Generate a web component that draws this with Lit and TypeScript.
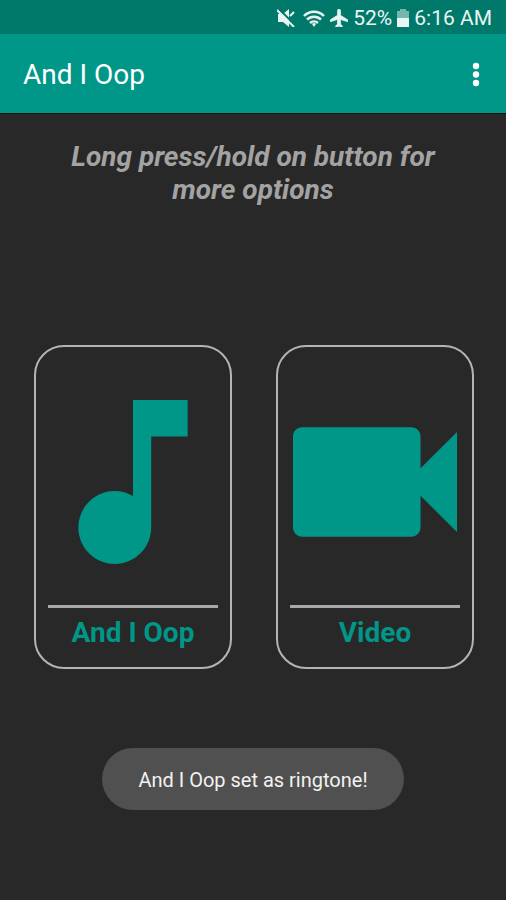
import { LitElement, html, css, svg } from "lit";
import { customElement, property } from "lit/decorators.js";

const NOTE = svg`<path d="M12 3v10.55c-.59-.34-1.27-.55-2-.55-2.21 0-4 1.79-4 4s1.79 4 4 4 4-1.79 4-4V7h4V3z"/>`;
const CAMERA = svg`<path d="M17 10.5V7c0-.55-.45-1-1-1H4c-.55 0-1 .45-1 1v10c0 .55.45 1 1 1h12c.55 0 1-.45 1-1v-3.5l4 4v-11z"/>`;

@customElement("sound-card")
export class SoundCard extends LitElement {
  @property() label = "";
  @property() icon: "note" | "camera" = "note";

  static styles = css`
    :host {
      display: block;
    }
    .card {
      display: flex;
      flex-direction: column;
      align-items: center;
      box-sizing: border-box;
      width: 100%;
      margin: 0;
      padding: 53px 12px 16px;
      border: 2px solid #b4b4b4;
      border-radius: 30px;
      background: none;
      color: #009688;
      font: 700 28px/36px Roboto, sans-serif;
      cursor: pointer;
    }
    .icon {
      width: 164px;
      max-width: 100%;
      aspect-ratio: 1;
      fill: currentColor;
    }
    .rule {
      align-self: stretch;
      height: 3px;
      margin: 41px 0 7px;
      background: #a8a8a8;
    }
  `;

  render() {
    return html`
      <button class="card" type="button">
        <svg class="icon" viewBox="3 3 18 18" aria-hidden="true">
          ${this.icon === "note" ? NOTE : CAMERA}
        </svg>
        <span class="rule"></span>
        <span>${this.label}</span>
      </button>
    `;
  }
}

@customElement("app-root")
export class AppRoot extends LitElement {
  static styles = css`
    :host {
      display: flex;
      flex-direction: column;
      min-height: 100vh;
      background: #282828;
      color: #fff;
      font-family: Roboto, sans-serif;
    }
    .status {
      display: flex;
      align-items: center;
      justify-content: flex-end;
      gap: 5px;
      box-sizing: border-box;
      height: 34px;
      padding: 2px 14px 0;
      background: #00796b;
      color: #e9f5f3;
      font-size: 21px;
      line-height: 32px;
    }
    .status svg {
      fill: currentColor;
    }
    .mute {
      margin-right: 3px;
    }
    .bar {
      display: flex;
      align-items: center;
      justify-content: space-between;
      box-sizing: border-box;
      height: 80px;
      padding: 2px 20px 0 23px;
      background: #009688;
      border-bottom: 1px solid #101010;
    }
    .title {
      margin: 0;
      font-size: 28px;
      line-height: 36px;
      font-weight: 400;
    }
    .more {
      display: flex;
      padding: 0;
      border: 0;
      background: none;
      color: inherit;
      cursor: pointer;
    }
    .more svg {
      fill: currentColor;
    }
    .content {
      flex: 1;
      display: grid;
      grid-template-rows: 1fr auto 1fr;
    }
    .hint {
      margin: 0;
      padding: 26px 60px;
      color: #a3a3a3;
      font-size: 28px;
      line-height: 33px;
      font-weight: 700;
      font-style: italic;
      text-align: center;
    }
    .cards {
      display: grid;
      grid-template-columns: 1fr 1fr;
      gap: 44px;
      padding: 0 32px 0 34px;
    }
    .toast {
      align-self: end;
      justify-self: center;
      margin-bottom: 90px;
      padding: 17px 36px 15px;
      border-radius: 31px;
      background: #505050;
      color: #f2f2f2;
      font-size: 20px;
      line-height: 30px;
      white-space: nowrap;
    }
  `;

  render() {
    return html`
      <div class="status">
        <svg class="mute" width="18" height="18" viewBox="0 0 18 18" aria-label="Muted">
          <path d="M1 5h5l6-5v18l-6-5H1z" />
          <path d="M13 7l4-4" stroke="currentColor" stroke-width="2" />
          <path d="M2 0l17 17" stroke="#00796b" stroke-width="2" />
          <path d="M0 1l17 17" stroke="currentColor" stroke-width="2" />
        </svg>
        <svg width="22" height="17" viewBox="1 1 22 17" aria-label="Wi-Fi">
          <g fill="none" stroke="currentColor" stroke-width="2.500">
            <path d="M2 7a14 14 0 0 1 20 0" />
            <path d="M5 10.500a10 10 0 0 1 14 0" />
            <path d="M8 14a6 6 0 0 1 8 0" />
          </g>
          <path d="M12 18l-2-3a3 3 0 0 1 4 0z" />
        </svg>
        <svg width="18" height="18" viewBox="2 2 19 20" aria-label="Airplane mode">
          <path d="M21 16v-2l-8-5V3.500c0-.83-.67-1.500-1.500-1.500S10 2.670 10 3.500V9l-8 5v2l8-2.500V19l-2 1.500V22l3.500-1 3.500 1v-1.500L13 19v-5.500z" stroke="currentColor" />
        </svg>
        <span>52%</span>
        <svg width="12" height="18" viewBox="0 0 12 18" aria-label="Battery">
          <path d="M3 0h6v2h3v7H0V2h3z" opacity=".5" />
          <path d="M0 9h12v9H0z" />
        </svg>
        <span>6:16 AM</span>
      </div>
      <header class="bar">
        <h1 class="title">And I Oop</h1>
        <button class="more" type="button" aria-label="More options">
          <svg width="20" height="28" viewBox="0 0 20 28">
            <circle cx="10" cy="5" r="3.200" />
            <circle cx="10" cy="13.500" r="3.200" />
            <circle cx="10" cy="22" r="3.200" />
          </svg>
        </button>
      </header>
      <main class="content">
        <p class="hint">Long press/hold on button for more options</p>
        <div class="cards">
          <sound-card label="And I Oop" icon="note"></sound-card>
          <sound-card label="Video" icon="camera"></sound-card>
        </div>
        <div class="toast" role="status">And I Oop set as ringtone!</div>
      </main>
    `;
  }
}
